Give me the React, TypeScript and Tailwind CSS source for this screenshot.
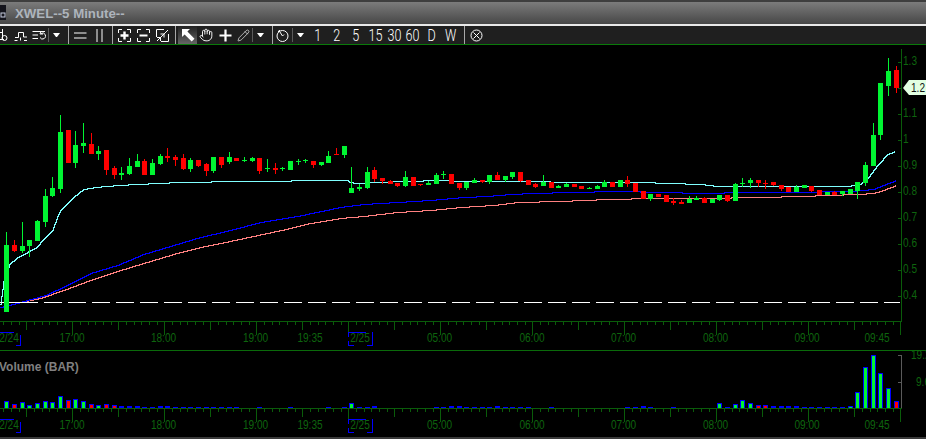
import React from "react";
import { Hand, Pencil } from "lucide-react";

const G = "#00f532";
const R = "#ff0000";
const AX = "#0a5c0a";
const TXT = "#0e640e";
const X = (i: number) => 6.3 + 7.667 * i;

// color, body top, body bottom, wick high, wick low
type C = [string, number, number, number?, number?];
const candles: C[] = [
  [G,245,312,232],[R,245,251,240,252],[G,246,251,222,253],[G,240,246,240,257],[G,221,241,220],
  [G,196,222,189,227],[G,188,196,177,197],[G,132,189,115,193],[R,130,163],[G,145,163,131,168],
  [G,143,146,123,153],[R,144,154,133],[G,151,154,146,160],[R,150,170,150,175],[R,168,175,166,179],
  [G,173,175,167,180],[G,166,174,158,175],[G,161,167,154],[R,161,175,159],[G,163,175,159],
  [G,156,164,154,165],[R,156,158,148,162],[R,157,160,155,166],[R,158,169,154,170],[G,160,169,158,172],
  [R,160,166,160,167],[R,164,171,163,176],[G,157,171,157,173],[R,157,165,157,168],[G,157,162,152,164],
  [R,158,161],[G,160,161,157,162],[G,158,161,157,162],[R,158,171,158,174],[G,168,169,159,172],
  [R,168,170,163,174],[G,168,169,167,171],[G,161,170],[G,161,162,159,165],[G,160,161,159,163],
  [R,161,165,161,168],[G,162,165,162,166],[G,156,163,151],[R,154,155,148],[G,146,155,146,158],
  [G,188,193,167],[G,187,189,184,191],[G,172,188,167,189],[R,170,179,167,182],[R,178,181,178,184],
  [R,181,184,180],[R,183,186,183,187],[G,177,186,171,187],[R,177,186],[R,184,185,184,186],
  [G,183,185,181],[G,175,184,173],[G,174,175,171,179],[R,174,184],[R,183,188,183,190],
  [G,182,188,182,190],[G,180,183,178],[R,180,182,180,183],[G,175,182,175,184],[R,175,180,172],
  [G,176,180,176,182],[G,172,177,172,179],[R,172,181,172,182],[R,180,185],[R,184,187,183,188],
  [G,182,186,175],[R,182,188],[G,186,188,185],[G,184,187,183],[R,184,187],
  [R,186,189],[G,188,189,187],[G,186,189,185],[G,182,187,180],[R,182,187],
  [G,180,187],[R,180,184,176,187],[R,183,192],[R,191,199],[G,194,199,194,201],
  [R,194,197],[R,195,202],[R,201,203,198,205],[R,202,204,200],[G,199,203,196],
  [G,198,200,196],[R,198,203,197],[G,199,203],[G,195,200,195,201],[R,195,201,195,202],
  [G,184,201,183],[G,183,184,178,187],[G,180,183,178,188],[R,180,183,180,187],[R,183,184,180,189],
  [R,182,185,182,186],[R,185,189,185,191],[R,187,192],[G,187,192,185],[G,185,188],
  [R,186,191,186,192],[R,190,195],[G,192,195],[R,192,195,191],[G,191,194,191,196],
  [G,189,194],[G,182,191,182,199],[G,165,183,162,186],[G,135,166,123],[G,83,135,83,140],
  [G,71,86,58,96],[R,70,88,66,93],
];

const vol: [number, number, string?][] = [
  [0,7,G],[1,4,R],[2,6,G],[3,3,G],[4,5,G],[5,7,G],[6,6,G],[7,12,G],[8,8,R],[9,9,G],[10,7,G],[11,4,R],[12,3,G],[13,4,R],[14,3,R],
  [15,2],[16,2],[17,2],[18,1],[19,1],[20,2],[21,2],[22,1],[23,1],[24,1],[25,1],[26,1],[27,1],[28,1],[29,1],[30,1],[33,1],[37,1],[42,1],[44,1],
  [45,5,G],[46,1],[47,1],[48,2],[56,1],[57,1],[58,2],[59,2],[60,1],[61,1],[62,1],[63,1],[64,2],[65,1],[66,1],[67,1],[68,1],[71,1],[81,1],[82,1],[83,2],[84,1],[87,1],
  [93,5,G],[94,1],[95,4,G],[96,8,G],[97,5,G],[98,3,R],[99,3,R],[100,2],[101,2],[102,2],[103,2],[104,1],[105,1],[106,1],[107,1],[108,1],[109,1],
  [110,2,G],[111,16,G],[112,41,G],[113,53,G],[114,35,G],[115,20,G],[116,7,R],
];

const cyan = "0,304 3,281 6,272 9,264 17,257 27,252 36,247 42,240 52,230 57,216 60,210 73,197 83,189 95,187 118,185 157,183 180,182 240,181 340,180 347,180 349,182 357,183 363,183 370,182 440,180 460,181 640,182 670,183 700,184 717,186 847,186 860,184 868,177 877,165 887,154 895,151";
const blue = "0,307 20,302 45,295 67,285 90,273 117,265 143,254 173,245 200,237 230,230 260,222 297,216 340,207 363,204 397,202 430,200 463,197 487,196 510,194 533,193 570,192 617,191 663,192 700,193 747,192 790,192 850,191 873,189 883,185 896,180";
const salmon = "20,302 40,298 63,290 90,280 117,271 143,263 173,254 200,247 220,243 281,230 310,223 340,218 363,216 397,212 430,210 460,207 493,205 517,202 560,201 607,199 653,198 700,198 760,197 800,196 857,194 873,193 883,190 896,185";

// turns a list of points into a one-pixel staircase, the way the chart draws its averages
function stair(points: string) {
  const pts = points.split(" ").map((p) => p.split(",").map(Number));
  let d = "";
  let last = NaN;
  for (let s = 0; s < pts.length - 1; s++) {
    const [x0, y0] = pts[s];
    const [x1, y1] = pts[s + 1];
    for (let x = x0; x < x1; x += 1) {
      const y = Math.round(y0 + ((y1 - y0) * (x - x0)) / (x1 - x0)) + 0.5;
      d += isNaN(last) ? `M${x} ${y}` : `V${y}`;
      d += `H${x + 1}`;
      last = y;
    }
  }
  return d;
}

const times: [string, number][] = [
  ["17:00",72],["18:00",163.5],["19:00",255.5],["19:35",310],["05:00",439.5],["06:00",532],["07:00",623.5],["08:00",715.5],["09:00",807],["09:45",877],
];

function L({ x, y, t, anchor = "middle", fill = TXT }: { x: number; y: number; t: string; anchor?: "middle" | "start"; fill?: string }) {
  return (
    <text transform={`translate(${x},${y}) scale(0.84,1)`} textAnchor={anchor} fontSize="12" fontFamily="'Liberation Sans',Arial,sans-serif" fill={fill}>
      {t}
    </text>
  );
}

function TimeAxis({ base, label }: { base: number; label: number }) {
  const ticks = [];
  for (let k = 0; k <= 117; k++) {
    const x = Math.round(3.3 + 7.667 * k);
    const m = (k - 9) % 12 === 0 ? 14 : (k - 3) % 12 === 0 ? 9 : 4;
    ticks.push(<rect key={k} x={x} y={base} width={1} height={m} fill={AX} />);
  }
  const top = label - 6;
  const bot = label + 7;
  return (
    <g shapeRendering="crispEdges">
      <rect x={0} y={base} width={902} height={1} fill={AX} />
      {ticks}
      {times.map(([t, x]) => (
        <L key={t} x={x} y={label + 4} t={t} />
      ))}
      <L x={9} y={label + 4} t="2/24" />
      <L x={360} y={label + 4} t="2/25" />
      <g fill="none" stroke="#0000ff" strokeWidth="1">
        <path d={`M0 ${top + 0.5}H14M15.5 ${bot + 0.5}H20.5V${top + 3}`} />
        <path d={`M348.5 ${top + 5}V${top + 0.5}H366M348.5 ${bot - 4}V${bot + 0.5}H354M367 ${bot + 0.5}H372.5V${top}`} />
      </g>
    </g>
  );
}

function PriceChart() {
  const prices = ["1.3", "", "1.1", "1", "0.9", "0.8", "0.7", "0.6", "0.5", "0.4"];
  const dashes = [];
  dashes.push(<rect key="d0" x={0} y={302} width={38} height={1} fill="#fff" />);
  for (let x = 44; x < 900; x += 24) dashes.push(<rect key={x} x={x} y={302} width={Math.min(18, 900 - x)} height={1} fill="#fff" />);
  return (
    <svg viewBox="0 45 926 305" className="block w-[926px] h-[305px]">
      <g fill="none" strokeWidth="1" shapeRendering="crispEdges">
        <path d={stair(cyan)} stroke="#80ffff" />
        <path d={stair(salmon)} stroke="#ff8080" />
        <path d={stair(blue)} stroke="#0000ff" />
      </g>
      <g shapeRendering="crispEdges">{dashes}</g>
      <g shapeRendering="crispEdges">
        {candles.map(([c, t, b, h, l], i) => {
          const x = Math.round(X(i));
          const hi = h ?? t;
          const lo = l ?? b;
          return (
            <g key={i} fill={c}>
              <rect x={x} y={hi} width={1} height={lo - hi} />
              <rect x={x - 2} y={t} width={5} height={Math.max(b - t, 1)} />
            </g>
          );
        })}
      </g>
      <g shapeRendering="crispEdges">
        <rect x={901} y={49} width={1} height={273} fill={AX} />
        {prices.map((p, i) => (
          <rect key={i} x={898} y={62 + 26 * i} width={3} height={1} fill={AX} />
        ))}
      </g>
      {prices.map((p, i) => p && <L key={i} x={903} y={65 + 26 * i} t={p} anchor="start" />)}
      <polygon points="903,88 909,80 926,80 926,95 909,95" fill="#e2ffe2" />
      <L x={911} y={92} t="1.2" anchor="start" fill="#111" />
      <TimeAxis base={321} label={338} />
    </svg>
  );
}

function VolumeChart() {
  return (
    <svg viewBox="0 351 926 86" className="block w-[926px] h-[86px]">
      <text x={-1} y={371} fontSize="12" fontWeight="700" fontFamily="'Liberation Sans',Arial,sans-serif" fill="#808080">
        Volume (BAR)
      </text>
      <g shapeRendering="crispEdges">
        {vol.map(([i, h, c]) => {
          const x = Math.round(X(i)) - 2;
          return (
            <g key={i}>
              <rect x={x} y={408 - h} width={5} height={h} fill="#0000ff" />
              {c && h > 2 && <rect x={x + 1} y={408 - h + 1} width={3} height={h - 1} fill={c} />}
              {c && h <= 2 && <rect x={x + 1} y={407} width={3} height={1} fill={c} />}
            </g>
          );
        })}
        <rect x={901} y={355} width={1} height={53} fill="#5a5a5a" />
        <rect x={898} y={355} width={3} height={1} fill="#5a5a5a" />
        <rect x={898} y={382} width={3} height={1} fill="#5a5a5a" />
      </g>
      <L x={911} y={359} t="19.2" anchor="start" />
      <L x={916} y={386} t="9.6" anchor="start" />
      <TimeAxis base={408} label={425} />
    </svg>
  );
}

const S = ({ children, w = 16, h = 16 }: { children: React.ReactNode; w?: number; h?: number }) => (
  <svg width={w} height={h} viewBox={`0 0 ${w} ${h}`} fill="none" stroke="#fff" strokeWidth="1" className="shrink-0">
    {children}
  </svg>
);

const Cell = ({ w, children }: { w: string; children?: React.ReactNode }) => (
  <div className={`${w} h-full flex items-center justify-center shrink-0`}>{children}</div>
);
const Sep = () => <div className="w-px h-full bg-[#a8a8a8] shrink-0" />;
const Minor = () => <div className="w-px h-[14px] bg-[#5a5a5a] shrink-0" />;
const Drop = () => (
  <S w={9} h={7}>
    <path d="M1 1H8L5 5H4Z" fill="#fff" stroke="none" />
  </S>
);
const Num = ({ w, t }: { w: string; t: string }) => (
  <Cell w={w}>
    <span className="font-['Roboto'] font-light text-[17px] leading-[17px] text-white scale-x-[.74] whitespace-nowrap">{t}</span>
  </Cell>
);

function Toolbar() {
  return (
    <div className="h-[18px] flex items-center bg-[#1f1f1f] overflow-hidden">
      <div className="w-[13px] h-full flex items-center shrink-0 overflow-hidden">
        <S w={10} h={14}>
          <path d="M2.5 1V11M0 11.5H4M4.5 7.5a2.5 2.5 0 1 1 0 5a2.5 2.5 0 0 1 0-5ZM0 4.5H2" />
        </S>
      </div>
      <Cell w="w-[16px]">
        <S w={14} h={12}>
          <path d="M1 8.5H4.5V3.5H9.5V8H13M0.5 11.5H3.5M6.5 11.5V8.5M10 11.5H13" />
        </S>
      </Cell>
      <Cell w="w-[19px]">
        <S w={14} h={12}>
          <path d="M0.5 2.5H13M0.5 6H6M0.5 9.5H6M8 8.5a3 3 0 1 0 1-4M9 2.5L8 5H11" />
        </S>
      </Cell>
      <Minor />
      <Cell w="w-[14px]"><Drop /></Cell>
      <Cell w="w-[5px]" />
      <Sep />
      <Cell w="w-[22px]">
        <S w={13} h={7}>
          <path d="M0 1H12.5M0 6H12.5" />
        </S>
      </Cell>
      <Cell w="w-[16px]">
        <S w={7} h={13}>
          <path d="M1 0V13M6 0V13" />
        </S>
      </Cell>
      <Cell w="w-[5px]" />
      <Sep />
      <Cell w="w-[22px]">
        <S w={13} h={13}>
          <path d="M0.5 4V0.5H4M9 0.5H12.5V4M12.5 9V12.5H9M4 12.5H0.5V9" />
          <path d="M6.5 2.5V10.5M2.5 6.5H10.5" strokeWidth="2.4" />
        </S>
      </Cell>
      <Cell w="w-[16px]">
        <S w={13} h={13}>
          <path d="M0.5 4V0.5H4M9 0.5H12.5V4M12.5 9V12.5H9M4 12.5H0.5V9" />
          <path d="M2.5 6.5H10.5" strokeWidth="2" />
        </S>
      </Cell>
      <Cell w="w-[22px]">
        <S w={13} h={13}>
          <path d="M0.5 8V0.5H8M12.5 5V12.5H5M8 5L1 12M12 1L8 5M4.5 5H8V8.5M1 8.5H4.5V12" />
        </S>
      </Cell>
      <Cell w="w-[2px]" />
      <Sep />
      <Cell w="w-[2px]" />
      <div className="w-[19px] h-full flex items-center justify-center shrink-0 bg-gradient-to-b from-[#222222] to-[#666666]">
        <S w={14} h={14}>
          <path d="M1 1H9L6.4 3.6L13.5 10.7L10.7 13.5L3.6 6.4L1 9Z" fill="#fff" stroke="none" />
        </S>
      </div>
      <Cell w="w-[18px]"><Hand size={14} color="#fff" strokeWidth={1.6} /></Cell>
      <Cell w="w-[20px]">
        <S w={13} h={13}>
          <path d="M6.5 0.5V12.5M0.5 6.5H12.5" strokeWidth="2.2" />
        </S>
      </Cell>
      <Cell w="w-[16px]"><Pencil size={13} color="#fff" strokeWidth={1.2} /></Cell>
      <Cell w="w-[1px]" />
      <Minor />
      <Cell w="w-[14px]"><Drop /></Cell>
      <Cell w="w-[5px]" />
      <Sep />
      <Cell w="w-[19px]">
        <S w={13} h={13}>
          <circle cx="6.5" cy="7" r="5.5" />
          <path d="M3 1.5L6.5 7L8 5.5M2 3L4 1" />
        </S>
      </Cell>
      <Minor />
      <Cell w="w-[14px]"><Drop /></Cell>
      <Num w="w-[22px]" t="1" />
      <Num w="w-[16px]" t="2" />
      <Num w="w-[22px]" t="5" />
      <Num w="w-[16px]" t="15" />
      <Num w="w-[22px]" t="30" />
      <Num w="w-[14px]" t="60" />
      <Num w="w-[26px]" t="D" />
      <Num w="w-[12px]" t="W" />
      <Cell w="w-[7px]" />
      <Sep />
      <Cell w="w-[22px]">
        <S w={13} h={13}>
          <circle cx="6.5" cy="6.5" r="5.5" />
          <path d="M3.5 3.5L9.5 9.5M9.5 3.5L3.5 9.5" />
        </S>
      </Cell>
    </div>
  );
}

export default function App() {
  return (
    <div className="w-[926px] h-[439px] bg-black overflow-hidden flex flex-col">
      <div className="h-[24px] flex items-start shrink-0 border-t-2 border-[#3e3e3e] bg-gradient-to-b from-[#7c7c7c] to-[#474747]">
        <svg width="6" height="15" viewBox="0 0 6 15" className="mt-[3px] shrink-0">
          <rect width="6" height="15" fill="#14141c" />
          <rect x="1" y="8" width="4" height="4" fill="none" stroke="#c8cde0" />
        </svg>
        <span className="ml-[9px] mt-[3px] font-['Liberation_Sans'] font-bold text-[13.25px] leading-[18px] text-[#adb4bc] whitespace-nowrap">
          XWEL--5 Minute--
        </span>
      </div>
      <div className="h-[2px] bg-[#e8e8e8] shrink-0" />
      <Toolbar />
      <div className="h-px bg-[#0a7a0a] shrink-0" />
      <PriceChart />
      <div className="h-px bg-[#0a6a0a] shrink-0" />
      <VolumeChart />
      <div className="h-[2px] bg-[#3a3a3a] shrink-0" />
    </div>
  );
}
